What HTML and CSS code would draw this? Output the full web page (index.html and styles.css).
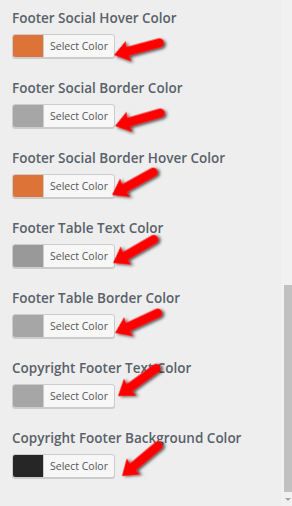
FILE: index.html
```html
<!DOCTYPE html>
<html lang="en">
<head>
  <meta charset="UTF-8">
  <title>Footer Colors</title>
  <link rel="stylesheet" href="styles.css">
</head>
<body>
  <svg class="defs" width="0" height="0">
    <defs>
      <filter id="shade" x="-30%" y="-60%" width="160%" height="220%">
        <feDropShadow dx="1.5" dy="2" stdDeviation="1.5" flood-color="#000" flood-opacity="0.7"/>
      </filter>
      <path id="arrow" d="M0 0 L15 -10.5 L14 -4.5 L47 -4.5 A4.5 4.5 0 0 1 47 4.5 L14 4.5 L15 10.5 Z" fill="#f00"/>
    </defs>
  </svg>

  <div class="page">
    <div class="settings">
      <div class="field">
        <div class="label">Footer Social Hover Color</div>
        <button class="picker"><span class="swatch" style="background:#dd7337"></span><span class="pick-text">Select Color</span></button>
        <svg class="arrow" width="80" height="56"><use href="#arrow" filter="url(#shade)" transform="translate(14 41) rotate(-15)"/></svg>
      </div>

      <div class="field">
        <div class="label">Footer Social Border Color</div>
        <button class="picker"><span class="swatch" style="background:#a6a6a6"></span><span class="pick-text">Select Color</span></button>
        <svg class="arrow" width="80" height="56"><use href="#arrow" filter="url(#shade)" transform="translate(15 42) rotate(-16)"/></svg>
      </div>

      <div class="field">
        <div class="label">Footer Social Border Hover Color</div>
        <button class="picker"><span class="swatch" style="background:#dd7337"></span><span class="pick-text">Select Color</span></button>
        <svg class="arrow" width="80" height="56"><use href="#arrow" filter="url(#shade)" transform="translate(12 41) rotate(-29)"/></svg>
      </div>

      <div class="field">
        <div class="label">Footer Table Text Color</div>
        <button class="picker"><span class="swatch" style="background:#999999"></span><span class="pick-text">Select Color</span></button>
        <svg class="arrow" width="80" height="56"><use href="#arrow" filter="url(#shade)" transform="translate(13 39) rotate(-30)"/></svg>
      </div>

      <div class="field">
        <div class="label">Footer Table Border Color</div>
        <button class="picker"><span class="swatch" style="background:#a6a6a6"></span><span class="pick-text">Select Color</span></button>
        <svg class="arrow" width="80" height="56"><use href="#arrow" filter="url(#shade)" transform="translate(15 39) rotate(-25)"/></svg>
      </div>

      <div class="field">
        <div class="label">Copyright Footer Text Color</div>
        <button class="picker"><span class="swatch" style="background:#a6a6a6"></span><span class="pick-text">Select Color</span></button>
        <svg class="arrow" width="80" height="56"><use href="#arrow" filter="url(#shade)" transform="translate(18 32) rotate(-36)"/></svg>
      </div>

      <div class="field">
        <div class="label">Copyright Footer Background Color</div>
        <button class="picker"><span class="swatch" style="background:#262626"></span><span class="pick-text">Select Color</span></button>
        <svg class="arrow" width="80" height="56"><use href="#arrow" filter="url(#shade)" transform="translate(22 42) rotate(-40)"/></svg>
      </div>
    </div>

    <div class="scrollbar">
      <div class="thumb"></div>
      <div class="down"></div>
    </div>
  </div>
</body>
</html>
```

FILE: styles.css
```css
body {
  margin: 0;
  background: #eeeeee;
  font-family: "Open Sans", "Noto Sans", sans-serif;
  overflow: hidden;
}

.defs {
  position: absolute;
}

.page {
  display: flex;
  height: 506px;
}

.settings {
  flex: 1;
  padding-left: 12px;
}

.field {
  position: relative;
  height: 70px;
  padding-top: 9px;
  box-sizing: border-box;
}

.label {
  font-size: 13.5px;
  font-weight: 600;
  line-height: 18px;
  color: #59616a;
  white-space: nowrap;
}

.picker {
  display: flex;
  margin: 7px 0 0;
  padding: 0;
  height: 24px;
  border: 1px solid #cccccc;
  border-radius: 3px;
  background: #f7f7f7;
  box-shadow: 0 1px 0 #cccccc;
  overflow: hidden;
  font-family: inherit;
  box-sizing: border-box;
}

.swatch {
  width: 30px;
  height: 100%;
}

.pick-text {
  width: 70px;
  border-left: 1px solid #cccccc;
  font-size: 10.5px;
  line-height: 22px;
  text-align: center;
  color: #555555;
}

.arrow {
  position: absolute;
  left: 88px;
  top: 14px;
  overflow: visible;
}

.scrollbar {
  width: 11px;
  background: #f1f1f1;
  display: flex;
  flex-direction: column;
  align-items: flex-end;
  padding-top: 285px;
  box-sizing: border-box;
}

.thumb {
  width: 8px;
  height: 207px;
  background: #c1c1c1;
}

.down {
  margin: 6px 1px 0 0;
  width: 0;
  height: 0;
  border-left: 3px solid transparent;
  border-right: 3px solid transparent;
  border-top: 3px solid #a3a3a3;
}
```
